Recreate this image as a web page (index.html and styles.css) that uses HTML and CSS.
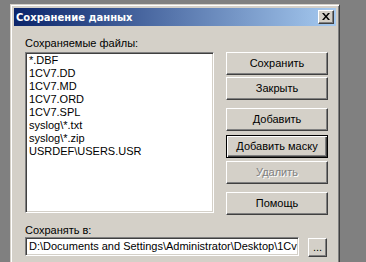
FILE: index.html
```html
<!DOCTYPE html>
<html>
<head>
<meta charset="utf-8">
<link rel="stylesheet" href="styles.css">
</head>
<body>
<div class="dialog">
  <div class="titlebar">
    <span class="title">Сохранение данных</span>
    <button class="close" aria-label="Закрыть">
      <svg width="8" height="7" viewBox="0 0 8 7"><path d="M0 0h2l2 2.5L6 0h2L5 3.5 8 7H6L4 4.5 2 7H0l3-3.5z" fill="#000"/></svg>
    </button>
  </div>
  <div class="body">
    <div class="top">
      <div class="leftcol">
        <div class="label">Сохраняемые файлы:</div>
        <div class="list">
          <div class="item">*.DBF</div>
          <div class="item">1CV7.DD</div>
          <div class="item">1CV7.MD</div>
          <div class="item">1CV7.ORD</div>
          <div class="item">1CV7.SPL</div>
          <div class="item">syslog\*.txt</div>
          <div class="item">syslog\*.zip</div>
          <div class="item">USRDEF\USERS.USR</div>
        </div>
      </div>
      <div class="buttons">
        <button class="btn">Сохранить</button>
        <button class="btn g2">Закрыть</button>
        <button class="btn g8">Добавить</button>
        <button class="btn default g4">Добавить маску</button>
        <button class="btn disabled g3">Удалить</button>
        <button class="btn g8">Помощь</button>
      </div>
    </div>
    <div class="label label2">Сохранять в:</div>
    <div class="pathrow">
      <div class="path">D:\Documents and Settings\Administrator\Desktop\1Cv</div>
      <button class="btn browse">...</button>
    </div>
  </div>
</div>
</body>
</html>
```

FILE: styles.css
```css
html, body {
  margin: 0;
  padding: 0;
  background: #808080;
  overflow: hidden;
  width: 366px;
  height: 262px;
}
body {
  font-family: "Liberation Sans", Arial, sans-serif;
  font-size: 11px;
  color: #000;
}
.dialog {
  margin: 4px 0 0 10px;
  width: 330px;
  height: 258px;
  box-sizing: border-box;
  background: #d4d0c8;
  border: 1px solid;
  border-bottom: 0;
  border-color: #d4d0c8 #404040 #404040 #d4d0c8;
  box-shadow: inset 1px 1px #fff, inset -1px 0 #808080;
  padding: 3px 3px 0 3px;
  overflow: hidden;
}
.titlebar {
  height: 18px;
  display: flex;
  align-items: center;
  justify-content: space-between;
  background: linear-gradient(to right, #0a246a, #a6caf0);
  padding: 0 2px 0 2px;
}
.title {
  color: #fff;
  font-family: "DejaVu Sans", Verdana, sans-serif;
  font-weight: bold;
  font-size: 10px;
}
.close {
  width: 16px;
  height: 14px;
  padding: 0;
  margin: 0;
  background: #d4d0c8;
  border: 1px solid;
  border-color: #fff #404040 #404040 #fff;
  box-shadow: inset -1px -1px #808080;
  display: flex;
  align-items: center;
  justify-content: center;
}
.close svg { display: block; margin: 0 1px 1px 0; }
.body {
  padding: 11px 8px 0 11px;
}
.top {
  display: flex;
  gap: 12px;
}
.leftcol {
  width: 189px;
  display: flex;
  flex-direction: column;
}
.label {
  height: 13px;
  line-height: 13px;
  white-space: nowrap;
}
.list {
  margin-top: 2px;
  height: 161px;
  box-sizing: border-box;
  background: #fff;
  border: 1px solid;
  border-color: #808080 #fff #fff #808080;
  box-shadow: inset 1px 1px #404040, inset -1px -1px #d4d0c8;
  padding: 1px 2px 1px 3px;
}
.item {
  height: 13px;
  line-height: 13px;
  white-space: nowrap;
}
.buttons {
  width: 102px;
  display: flex;
  flex-direction: column;
  padding-top: 15px;
}
.btn {
  font-family: "Liberation Sans", Arial, sans-serif;
  font-size: 11px;
  color: #000;
  height: 23px;
  width: 102px;
  padding: 0;
  margin: 0;
  background: #d4d0c8;
  border: 1px solid;
  border-color: #fff #404040 #404040 #fff;
  box-shadow: inset -1px -1px #808080;
  line-height: 19px;
}
.btn.g2 { margin-top: 2px; }
.btn.g3 { margin-top: 3px; }
.btn.g4 { margin-top: 4px; }
.btn.g8 { margin-top: 8px; }
.btn.default {
  border: 1px solid #000;
  box-shadow: inset 1px 1px #fff, inset -1px -1px #404040, inset -2px -2px #808080;
}
.btn.disabled {
  color: #808080;
  text-shadow: 1px 1px #fff;
}
.label2 {
  margin-top: 9px;
}
.pathrow {
  display: flex;
  align-items: flex-start;
  gap: 9px;
}
.path {
  width: 274px;
  height: 19px;
  box-sizing: border-box;
  background: #fff;
  border: 1px solid;
  border-color: #808080 #fff #fff #808080;
  box-shadow: inset 1px 1px #404040, inset -1px -1px #d4d0c8;
  padding: 0 2px 0 3px;
  line-height: 17px;
  white-space: nowrap;
  overflow: hidden;
}
.btn.browse {
  width: 19px;
  height: 19px;
  margin-top: 1px;
  line-height: 15px;
  letter-spacing: 0;
}
```
